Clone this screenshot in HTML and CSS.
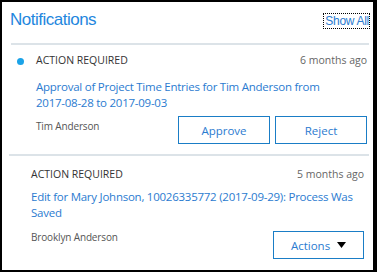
FILE: index.html
```html
<!DOCTYPE html>
<html>

<head>
    <meta charset="UTF-8">
    <link rel="stylesheet" href="styles.css">
</head>

<body>
    <div class="card">
        <div class="card-header">
            <h2 class="card-title">Notifications</h2>
            <a class="show-all" href="#">Show All</a>
        </div>
        <div class="divider divider-top"></div>

        <div class="item item-unread">
            <span class="dot"></span>
            <div class="item-meta">
                <span class="item-type">ACTION REQUIRED</span>
                <span class="item-time">6 months ago</span>
            </div>
            <a class="item-title" href="#">Approval of Project Time Entries for Tim Anderson from <span class="nowrap">2017-08-28</span> to <span class="nowrap">2017-09-03</span></a>
            <div class="item-footer">
                <span class="item-from">Tim Anderson</span>
                <div class="item-actions">
                    <button class="btn">Approve</button>
                    <button class="btn">Reject</button>
                </div>
            </div>
        </div>
        <div class="divider"></div>

        <div class="item item-read">
            <div class="item-meta">
                <span class="item-type">ACTION REQUIRED</span>
                <span class="item-time">5 months ago</span>
            </div>
            <a class="item-title" href="#">Edit for Mary Johnson, 10026335772 (2017-09-29): Process Was Saved</a>
            <div class="item-footer">
                <span class="item-from">Brooklyn Anderson</span>
                <div class="item-actions">
                    <button class="btn btn-menu">Actions
                        <svg width="9" height="6" viewBox="0 0 9 6"><path d="M0 0H9L4.5 6Z" fill="#000"/></svg>
                    </button>
                </div>
            </div>
        </div>
    </div>
</body>
</html>
```

FILE: styles.css
```css
:root {
    --title-blue: #1f87de;
    --link-blue: #2b7bd0;
    --btn-border: #1a7dc6;
    --line: #dce3e8;
}

body {
    margin: 0;
    background: #000;
    font-family: 'Open Sans', 'Noto Sans', sans-serif;
}

.card {
    margin: 2px 4px 2px 2px;
    height: 268px;
    background: #fff;
    box-sizing: border-box;
    overflow: hidden;
}

.card-header {
    display: flex;
    justify-content: space-between;
    align-items: flex-start;
    padding: 8px 4px 0 8px;
    height: 33px;
}

.card-title {
    margin: 0;
    font-family: 'Liberation Sans', Arial, sans-serif;
    font-weight: normal;
    font-size: 17px;
    letter-spacing: -0.5px;
    line-height: 20px;
    color: var(--title-blue);
}

.show-all {
    margin-top: 4px;
    font-family: 'Liberation Sans', Arial, sans-serif;
    font-size: 12px;
    letter-spacing: -0.3px;
    line-height: 14px;
    color: var(--link-blue);
    text-decoration: none;
    outline: 1px dotted #000;
    padding: 0 0 0 1px;
}

.divider {
    height: 2px;
    background: var(--line);
    margin: 0 4px 0 7px;
}

.divider-top {
    margin-left: 9px;
}

.item {
    position: relative;
}

.item-unread {
    padding: 8px 6px 10px 34px;
}

.item-read {
    padding: 11px 9px 10px 29px;
}

.dot {
    position: absolute;
    left: 15px;
    top: 13px;
    width: 7px;
    height: 7px;
    border-radius: 50%;
    background: #1ba3e8;
}

.item-meta {
    display: flex;
    justify-content: space-between;
    font-size: 10.5px;
    line-height: 14px;
}

.item-type {
    color: #333;
}

.item-time {
    color: #666;
}

.item-title {
    display: block;
    margin-top: 12px;
    font-size: 11.5px;
    letter-spacing: -0.25px;
    line-height: 16px;
    color: var(--link-blue);
    text-decoration: none;
}

.nowrap {
    white-space: nowrap;
}

.item-read .item-title {
    margin-top: 8px;
}

.item-footer {
    display: flex;
    justify-content: space-between;
    align-items: flex-start;
    margin-top: 5px;
}

.item-read .item-footer {
    margin-top: 10px;
}

.item-from {
    margin-top: 2px;
    font-size: 10px;
    letter-spacing: -0.15px;
    line-height: 16px;
    color: #555;
}

.item-read .item-from {
    margin-top: -2px;
}

.item-actions {
    display: flex;
    gap: 5px;
}

.btn {
    width: 92px;
    height: 28px;
    box-sizing: border-box;
    background: #fff;
    border: 1px solid var(--btn-border);
    border-radius: 0;
    font-family: 'Open Sans', 'Noto Sans', sans-serif;
    font-size: 11.5px;
    color: var(--link-blue);
    padding: 0;
    margin: 0;
}

.btn-menu {
    width: 91px;
    display: flex;
    align-items: center;
    justify-content: center;
    gap: 7px;
}
```
